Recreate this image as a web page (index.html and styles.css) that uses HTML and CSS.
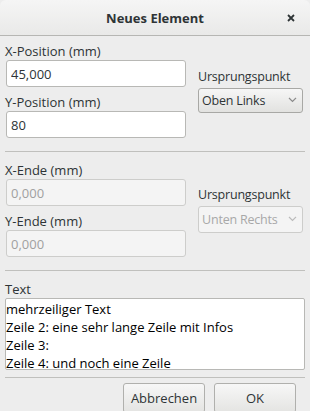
FILE: index.html
```html
<!DOCTYPE html>
<html lang="de">
  <head>
    <meta charset="UTF-8" />
    <title>Neues Element</title>
    <link rel="stylesheet" href="styles.css">
  </head>
  <body>
    <div class="dialog">
      <div class="titlebar">
        <span class="title">Neues Element</span>
        <svg class="close" width="8" height="8" viewBox="0 0 8 8"><path d="M1 1 L7 7 M7 1 L1 7" stroke="#2e3436" stroke-width="1.8"/></svg>
      </div>
      <div class="content">
        <div class="group">
          <div class="fields">
            <label class="label">X-Position (mm)</label>
            <input class="entry" type="text" value="45,000" />
            <label class="label">Y-Position (mm)</label>
            <input class="entry" type="text" value="80" />
          </div>
          <div class="origin">
            <label class="label">Ursprungspunkt</label>
            <div class="combo">
              <span>Oben Links</span>
              <svg width="9" height="6" viewBox="0 0 9 6"><path d="M1 1 L4.5 4.5 L8 1" fill="none" stroke="#8a8a8a" stroke-width="1.2"/></svg>
            </div>
          </div>
        </div>
        <div class="separator"></div>
        <div class="group">
          <div class="fields">
            <label class="label">X-Ende (mm)</label>
            <input class="entry" type="text" value="0,000" disabled />
            <label class="label">Y-Ende (mm)</label>
            <input class="entry" type="text" value="0,000" disabled />
          </div>
          <div class="origin">
            <label class="label">Ursprungspunkt</label>
            <div class="combo disabled">
              <span>Unten Rechts</span>
              <svg width="9" height="6" viewBox="0 0 9 6"><path d="M1 1 L4.5 4.5 L8 1" fill="none" stroke="#bbb" stroke-width="1.2"/></svg>
            </div>
          </div>
        </div>
        <div class="separator"></div>
        <label class="label">Text</label>
        <div class="textview">mehrzeiliger Text<br>Zeile 2: eine sehr lange Zeile mit Infos<br>Zeile 3:<br>Zeile 4: und noch eine Zeile</div>
        <div class="separator bottom"></div>
        <div class="buttons">
          <button class="button">Abbrechen</button>
          <button class="button">OK</button>
        </div>
      </div>
    </div>
  </body>
</html>
```

FILE: styles.css
```css
body {
  margin: 0;
  font-family: "Open Sans", "Noto Sans", sans-serif;
  font-size: 13px;
  color: #2e3436;
  background-color: #ededed;
}

.dialog {
  width: 310px;
  height: 411px;
  background-color: #ededed;
  overflow: hidden;
}

.titlebar {
  height: 35px;
  border-bottom: 1px solid #b6b6b3;
  border-radius: 6px 6px 0 0;
  background: linear-gradient(#f5f5f5, #e9e9e8);
  display: flex;
  align-items: center;
  justify-content: center;
  position: relative;
}

.title {
  font-weight: bold;
  font-size: 13px;
  color: #2e3436;
}

.close {
  position: absolute;
  right: 15px;
  top: 14px;
}

.content {
  padding: 6px 5px 0 5px;
}

.group {
  display: flex;
  align-items: center;
}

.fields {
  display: flex;
  flex-direction: column;
  width: 181px;
}

.label {
  display: block;
  line-height: 18px;
}

.origin .label {
  font-size: 12.5px;
  letter-spacing: -0.2px;
}

.entry {
  font-family: inherit;
  font-size: 13px;
  color: #2e3436;
  height: 27px;
  box-sizing: border-box;
  margin: 0 0 6px 1px;
  padding: 0 4px;
  width: 180px;
  border: 1px solid #b8b8b5;
  border-radius: 3px;
  background-color: #fff;
  outline: none;
}

.entry:last-child {
  margin-bottom: 0;
}

.entry:disabled {
  background-color: #f4f4f4;
  border-color: #cdcdcb;
  color: #a0a0a0;
}

.origin {
  margin-left: 12px;
}

.combo {
  margin-top: 2px;
  width: 105px;
  height: 25px;
  box-sizing: border-box;
  border: 1px solid #a8a8a5;
  border-radius: 3px;
  background: linear-gradient(#f6f6f6, #e2e2e0);
  display: flex;
  align-items: center;
  justify-content: space-between;
  padding: 0 5px 0 3px;
  white-space: nowrap;
}

.combo span {
  font-size: 12.5px;
  letter-spacing: -0.2px;
}

.combo.disabled {
  background: #f4f4f4;
  border-color: #cdcdcb;
  color: #a8a8a8;
  height: 27px;
}

.separator {
  height: 1px;
  background-color: #c0c0bd;
  margin: 13px 0 9px 0;
}

.separator.bottom {
  margin: 7px 0 5px 0;
}

.textview {
  height: 72px;
  box-sizing: border-box;
  border: 1px solid #b8b8b5;
  border-radius: 2px;
  background-color: #fff;
  line-height: 18px;
  color: #000;
  padding-top: 1px;
}

.buttons {
  display: flex;
  justify-content: flex-end;
  gap: 9px;
  padding-right: 9px;
}

.button {
  font-family: inherit;
  font-size: 13px;
  color: #2e3436;
  width: 82px;
  height: 30px;
  border: 1px solid #b0b0ad;
  border-radius: 3px;
  background: linear-gradient(#f7f7f7, #e4e4e2);
}
```
